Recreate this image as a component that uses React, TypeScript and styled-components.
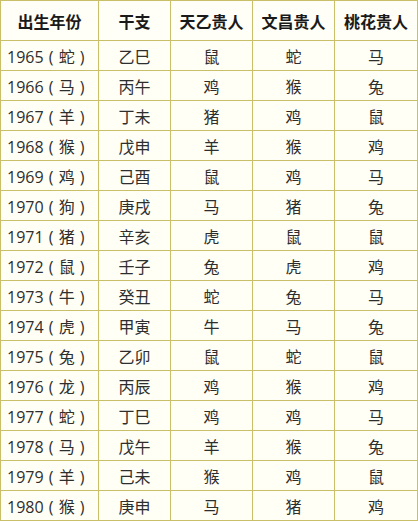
import styled, { createGlobalStyle } from "styled-components";

// 出生年份 / 干支 / 三贵人 对照表
const rows: [string, string, string, string, string, string][] = [
    ["1965", "蛇", "乙巳", "鼠", "蛇", "马"],
    ["1966", "马", "丙午", "鸡", "猴", "兔"],
    ["1967", "羊", "丁未", "猪", "鸡", "鼠"],
    ["1968", "猴", "戊申", "羊", "猴", "鸡"],
    ["1969", "鸡", "己酉", "鼠", "鸡", "马"],
    ["1970", "狗", "庚戌", "马", "猪", "兔"],
    ["1971", "猪", "辛亥", "虎", "鼠", "鼠"],
    ["1972", "鼠", "壬子", "兔", "虎", "鸡"],
    ["1973", "牛", "癸丑", "蛇", "兔", "马"],
    ["1974", "虎", "甲寅", "牛", "马", "兔"],
    ["1975", "兔", "乙卯", "鼠", "蛇", "鼠"],
    ["1976", "龙", "丙辰", "鸡", "猴", "鸡"],
    ["1977", "蛇", "丁巳", "鸡", "鸡", "马"],
    ["1978", "马", "戊午", "羊", "猴", "兔"],
    ["1979", "羊", "己未", "猴", "鸡", "鼠"],
    ["1980", "猴", "庚申", "马", "猪", "鸡"],
];

const headers = ["出生年份", "干支", "天乙贵人", "文昌贵人", "桃花贵人"];

const GlobalStyle = createGlobalStyle`
    html, body {
        margin: 0;
        padding: 0;
        background: #ffffff;
    }
    body {
        font-family: "Open Sans", "Noto Sans CJK SC", sans-serif;
    }
`;

function App() {
    return (
        <>
            <GlobalStyle />
            <Table>
                {headers.map((h) => (
                    <HeadCell key={h}>{h}</HeadCell>
                ))}
                {rows.map(([year, zodiac, ganzhi, tianyi, wenchang, taohua]) => (
                    <Row key={year}>
                        <Cell $first>{`${year} ( ${zodiac} )`}</Cell>
                        <Cell>{ganzhi}</Cell>
                        <Cell>{tianyi}</Cell>
                        <Cell>{wenchang}</Cell>
                        <Cell>{taohua}</Cell>
                    </Row>
                ))}
            </Table>
        </>
    );
}

export default App;

// --- Styled Components ---

const Table = styled.div`
    display: grid;
    grid-template-columns: 97px 71px 81px 81px 82px;
    grid-template-rows: 39px repeat(16, 29px);
    gap: 1px;
    padding: 1px;
    width: 418px;
    box-sizing: border-box;
    background-color: #c9bf69;
`;

// 각 데이터 행은 grid 에 그대로 펼친다
const Row = styled.div`
    display: contents;
`;

const HeadCell = styled.div`
    display: flex;
    align-items: center;
    justify-content: center;
    background-color: #fffff8;
    font-family: "Noto Sans CJK SC", sans-serif;
    font-size: 16px;
    font-weight: 700;
    color: #1a1a1a;
`;

const Cell = styled.div<{ $first?: boolean }>`
    display: flex;
    align-items: center;
    justify-content: ${({ $first }) => ($first ? "flex-start" : "center")};
    padding-left: ${({ $first }) => ($first ? "6px" : "0")};
    background-color: #fffff6;
    font-size: 16px;
    word-spacing: 1px;
    color: #2e2e2e;
    white-space: pre;
`;
